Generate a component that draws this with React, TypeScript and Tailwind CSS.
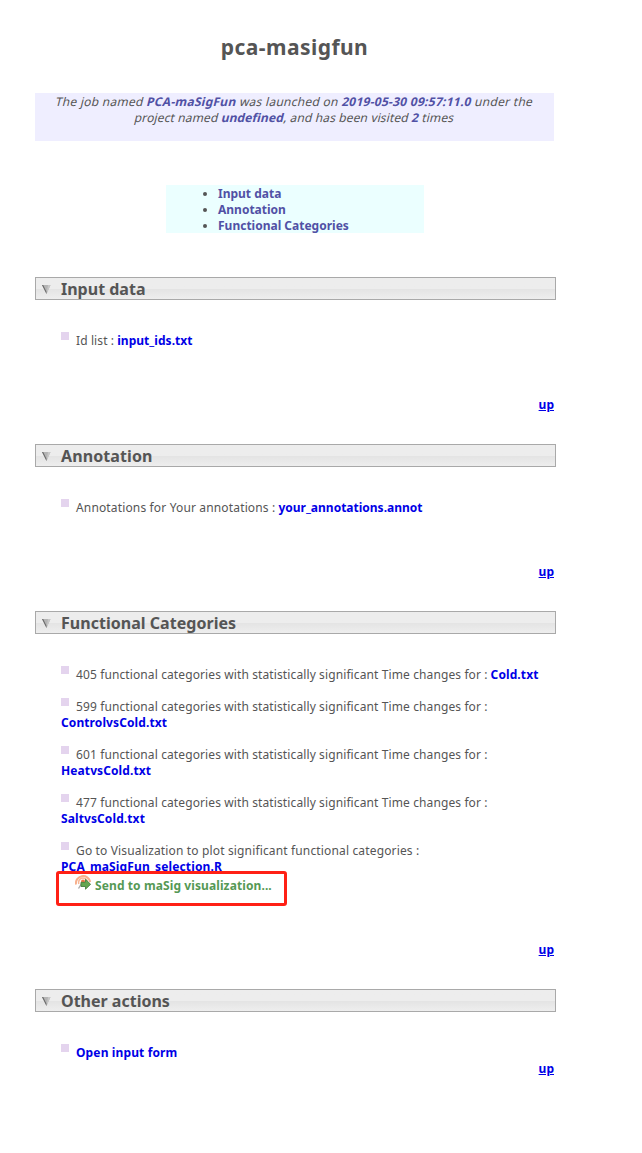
import type { ReactNode } from "react";

function SectionHeader({ title, spacing = "" }: { title: string; spacing?: string }) {
  return (
    <h2 className="flex h-[23px] w-[521px] items-center border border-[#a9a9a9] bg-linear-to-b from-[#ededed] from-50% via-[#e3e3e3] via-50% to-[#eeeeee] text-[16px] leading-[22px] font-bold">
      <svg className="mt-[2px] ml-[6px] h-[9px] w-[9px] shrink-0" viewBox="0 0 9 9">
        <path d="M0 0H8.5L4.5 9Z" fill="#b4b4b4" />
        <path d="M0 0L4.5 9L4.6 7L1.2 0Z" fill="#666666" />
        <path d="M8.5 0L4.5 9L6 0Z" fill="#c8c8c8" />
      </svg>
      <span className={"mt-px ml-[10px] whitespace-nowrap " + spacing}>{title}</span>
    </h2>
  );
}

function Row({ label, link, spacing = "tracking-[0.11px]", linkSpacing = "tracking-[0.1px]", wrap = false }: {
  label?: string; link?: string; spacing?: string; linkSpacing?: string; wrap?: boolean;
}) {
  return (
    <div className="ml-[26px] whitespace-nowrap">
      <div className="flex h-4">
        <span className="-mt-px mr-[7px] h-2 w-2 shrink-0 bg-[#e4d4ee]" />
        {label && <span className={"mr-[3px] " + spacing}>{label}</span>}
        {!wrap && <FileLink spacing={linkSpacing}>{link}</FileLink>}
      </div>
      {wrap && <div className="flex h-4"><FileLink spacing={linkSpacing}>{link}</FileLink></div>}
    </div>
  );
}

function FileLink({ children, spacing }: { children: ReactNode; spacing: string }) {
  return <a className={"font-bold text-[#0000e6] " + spacing}>{children}</a>;
}

function Up() {
  return <a className="block h-4 w-[519px] text-right font-bold text-[#0000e6] underline">up</a>;
}

function SendIcon() {
  return (
    <svg className="-mt-[4px] h-4 w-4 shrink-0" viewBox="0 0 16 16" fill="none">
      <path d="M1 10.5A7.2 7.2 0 1 1 15.2 8" stroke="#f8b08c" strokeWidth="2" />
      <path d="M3.8 10A4.4 4.4 0 1 1 12.3 7" stroke="#f7b898" strokeWidth="1.6" />
      <circle cx="8" cy="7.5" r="2" fill="#ef7645" />
      <path d="M7.5 8L3.5 14.5" stroke="#aaaaaa" strokeWidth="1.4" />
      <path d="M6 8.3H10.5V5.3L15.6 10.3L10.5 15.2V12.5H6Z" fill="#65a650" stroke="#47803f" strokeWidth="0.9" />
    </svg>
  );
}

export default function App() {
  return (
    <main className="h-[1153px] w-[642px] overflow-hidden bg-white pl-[35px] font-['Noto_Sans','Open_Sans',sans-serif] text-[12px] leading-4 text-[#555555]">
      <h1 className="h-[93px] w-[519px] pt-[33px] text-center text-[21px] leading-7 font-bold tracking-[0.45px]">pca-masigfun</h1>
      <div className="h-12 w-[519px] bg-[#efeeff] pt-px text-center whitespace-nowrap [&_b]:text-[#5151a5]">
        <p className="h-4 -skew-x-[14deg] tracking-[0.27px]">The job named <b>PCA-maSigFun</b> was launched on <b>2019-05-30 09:57:11.0</b> under the</p>
        <p className="h-4 -skew-x-[14deg] tracking-[0.13px]">project named <b>undefined</b>, and has been visited <b>2</b> times</p>
      </div>
      <ul className="mt-[44px] mb-[44px] ml-[131px] h-12 w-[258px] list-disc bg-[#ebffff] pt-px pl-[52px] font-bold whitespace-nowrap">
        <li><a className="text-[#5151a5]">Input data</a></li>
        <li><a className="text-[#5151a5]">Annotation</a></li>
        <li><a className="text-[#5151a5]">Functional Categories</a></li>
      </ul>

      <section className="h-[167px]">
        <SectionHeader title="Input data" />
        <div className="h-[97px] pt-[33px]"><Row label="Id list :" link="input_ids.txt" linkSpacing="tracking-[0.04px]" /></div>
        <Up />
      </section>
      <section className="h-[167px]">
        <SectionHeader title="Annotation" spacing="tracking-[0.1px]" />
        <div className="h-[97px] pt-[33px]"><Row label="Annotations for Your annotations :" link="your_annotations.annot" spacing="tracking-[0.15px]" linkSpacing="" /></div>
        <Up />
      </section>
      <section className="h-[378px]">
        <SectionHeader title="Functional Categories" spacing="tracking-[0.03px]" />
        <div className="flex h-[308px] flex-col gap-4 pt-[33px]">
          <Row label="405 functional categories with statistically significant Time changes for :" link="Cold.txt" />
          <Row label="599 functional categories with statistically significant Time changes for :" link="ControlvsCold.txt" wrap />
          <Row label="601 functional categories with statistically significant Time changes for :" link="HeatvsCold.txt" wrap />
          <Row label="477 functional categories with statistically significant Time changes for :" link="SaltvsCold.txt" wrap />
          <div>
            <Row label="Go to Visualization to plot significant functional categories :" link="PCA_maSigFun_selection.R" spacing="tracking-[0.15px]" linkSpacing="tracking-[0.14px]" wrap />
            <div className="relative -mt-1 ml-[21px] h-[35px] w-[231px] rounded-[3px] border-[3px] border-[#ff2015]">
              <a className="flex pt-1 pl-4 font-bold tracking-[0.1px] whitespace-nowrap text-[#559955]">
                <SendIcon /><span className="ml-[4px]">Send to maSig visualization...</span>
              </a>
            </div>
          </div>
        </div>
        <Up />
      </section>
      <section>
        <SectionHeader title="Other actions" />
        <div className="h-[49px] pt-[33px]"><Row link="Open input form" linkSpacing="tracking-[0.13px]" /></div>
        <Up />
      </section>
    </main>
  );
}
